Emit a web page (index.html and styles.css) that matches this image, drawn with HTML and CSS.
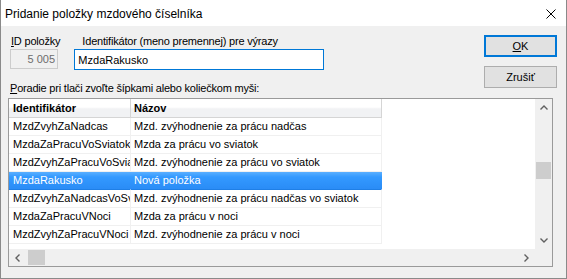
FILE: index.html
```html
<!DOCTYPE html>
<html lang="sk">
<head>
    <meta charset="UTF-8">
    <title>Pridanie položky mzdového číselníka</title>
    <link rel="stylesheet" href="styles.css">
</head>
<body>
    <div class="dialog">
        <!-- titulok okna -->
        <div class="titlebar">
            <span class="title">Pridanie položky mzdového číselníka</span>
            <svg class="close" width="10" height="10" viewBox="0 0 10 10">
                <path d="M0.5 0.5 L9.5 9.5 M9.5 0.5 L0.5 9.5" stroke="#000" stroke-width="1" fill="none"/>
            </svg>
        </div>

        <div class="content">
            <div class="top">
                <div class="fields">
                    <div class="field-row">
                        <div class="field field-id">
                            <label for="id_polozky"><u>I</u>D položky</label>
                            <input type="text" id="id_polozky" class="edit edit-id" value="5 005" readonly>
                        </div>
                        <div class="field field-ident">
                            <label for="identifikator">Identifikátor (meno premennej) pre výrazy</label>
                            <input type="text" id="identifikator" class="edit edit-ident" value="MzdaRakusko">
                        </div>
                    </div>
                    <label class="order-label"><u>P</u>oradie pri tlači zvoľte šípkami alebo koliečkom myši:</label>
                </div>

                <div class="buttons">
                    <button class="btn btn-default"><u>O</u>K</button>
                    <button class="btn">Zrušiť</button>
                </div>
            </div>

            <!-- zoznam položiek -->
            <div class="list">
                <div class="view">
                    <div class="row header">
                        <div class="cell col1">Identifikátor</div>
                        <div class="cell col2">Názov</div>
                    </div>
                    <div class="row">
                        <div class="cell col1">MzdZvyhZaNadcas</div>
                        <div class="cell col2">Mzd. zvýhodnenie za prácu nadčas</div>
                    </div>
                    <div class="row">
                        <div class="cell col1">MzdaZaPracuVoSviatok</div>
                        <div class="cell col2">Mzda za prácu vo sviatok</div>
                    </div>
                    <div class="row">
                        <div class="cell col1">MzdZvyhZaPracuVoSviatok</div>
                        <div class="cell col2">Mzd. zvýhodnenie za prácu vo sviatok</div>
                    </div>
                    <div class="row selected">
                        <div class="cell col1">MzdaRakusko</div>
                        <div class="cell col2">Nová položka</div>
                    </div>
                    <div class="row">
                        <div class="cell col1">MzdZvyhZaNadcasVoSviatok</div>
                        <div class="cell col2">Mzd. zvýhodnenie za prácu nadčas vo sviatok</div>
                    </div>
                    <div class="row">
                        <div class="cell col1">MzdaZaPracuVNoci</div>
                        <div class="cell col2">Mzda za prácu v noci</div>
                    </div>
                    <div class="row">
                        <div class="cell col1">MzdZvyhZaPracuVNoci</div>
                        <div class="cell col2">Mzd. zvýhodnenie za prácu v noci</div>
                    </div>
                </div>

                <div class="vscroll">
                    <div class="arrow">
                        <svg width="8" height="5" viewBox="0 0 8 5"><path d="M0.5 4.5 L4 1 L7.5 4.5" stroke="#606060" stroke-width="1.4" fill="none"/></svg>
                    </div>
                    <div class="vtrack">
                        <div class="vthumb"></div>
                    </div>
                    <div class="arrow">
                        <svg width="8" height="5" viewBox="0 0 8 5"><path d="M0.5 0.5 L4 4 L7.5 0.5" stroke="#606060" stroke-width="1.4" fill="none"/></svg>
                    </div>
                </div>

                <div class="hscroll">
                    <div class="arrow">
                        <svg width="5" height="8" viewBox="0 0 5 8"><path d="M4.5 0.5 L1 4 L4.5 7.5" stroke="#606060" stroke-width="1.4" fill="none"/></svg>
                    </div>
                    <div class="htrack">
                        <div class="hthumb"></div>
                    </div>
                    <div class="arrow">
                        <svg width="5" height="8" viewBox="0 0 5 8"><path d="M0.5 0.5 L4 4 L0.5 7.5" stroke="#606060" stroke-width="1.4" fill="none"/></svg>
                    </div>
                </div>

                <div class="corner"></div>
            </div>
        </div>
    </div>
</body>
</html>
```

FILE: styles.css
```css
/* celé okno dialógu */
body {
    margin: 0;
    font-family: "Liberation Sans", Arial, sans-serif;
    font-size: 11px;
    color: #000;
}

.dialog {
    width: 567px;
    height: 279px;
    box-sizing: border-box;
    border: 1px solid #8a8a8a;
    border-top: none;
    display: flex;
    flex-direction: column;
    background-color: #f0f0f0;
}

.titlebar {
    height: 26px;
    background-color: #fff;
    display: flex;
    align-items: center;
    justify-content: space-between;
    padding: 0 10px 0 4px;
    flex-shrink: 0;
}

.title {
    font-size: 12px;
    margin-top: 1px;
}

.close {
    margin-top: 2px;
}

.content {
    flex: 1;
    display: flex;
    flex-direction: column;
}

/* horná časť: polia a tlačidlá */
.top {
    display: flex;
    padding-top: 8px;
}

.fields {
    display: flex;
    flex-direction: column;
}

.field-row {
    display: flex;
}

.field {
    display: flex;
    flex-direction: column;
}

.field label,
.order-label {
    line-height: 15px;
    letter-spacing: -0.2px;
    white-space: nowrap;
}

.field-id {
    margin-left: 9px;
}

.field-id label {
    padding-left: 1px;
}

.field-ident {
    margin-left: 14px;
}

.field-ident label {
    padding-left: 8px;
}

.edit {
    font-family: "Liberation Sans", Arial, sans-serif;
    font-size: 11px;
    box-sizing: border-box;
    margin: 0;
    outline: none;
}

.edit-id {
    width: 48px;
    height: 20px;
    border: 1px solid #cccccc;
    background-color: #f0f0f0;
    color: #6d6d6d;
    text-align: right;
    padding: 0 2px 0 0;
}

.edit-ident {
    width: 250px;
    height: 21px;
    border: 1px solid #0078d7;
    background-color: #fff;
    color: #000;
    padding: 0 0 0 3px;
}

.order-label {
    margin: 11px 0 0 9px;
}

.buttons {
    margin-left: auto;
    margin-right: 9px;
    margin-top: 1px;
    display: flex;
    flex-direction: column;
    gap: 9px;
}

.btn {
    width: 73px;
    height: 22px;
    box-sizing: border-box;
    font-family: "Liberation Sans", Arial, sans-serif;
    font-size: 11px;
    color: #000;
    background-color: #e1e1e1;
    border: 1px solid #adadad;
    padding: 0;
}

.btn-default {
    border: 2px solid #0078d7;
}

/* zoznam so scrollbarmi */
.list {
    margin: 2px 0 0 7px;
    width: 545px;
    height: 169px;
    box-sizing: border-box;
    border: 1px solid #9a9a9a;
    display: grid;
    grid-template-columns: 1fr 17px;
    grid-template-rows: 1fr 17px;
}

.view {
    background-color: #fff;
    overflow: hidden;
}

.row {
    display: flex;
    height: 18px;
    width: 373px;
}

.cell {
    box-sizing: border-box;
    height: 18px;
    line-height: 17px;
    border-bottom: 1px solid #f0f0f0;
    border-right: 1px solid #f0f0f0;
    white-space: nowrap;
    overflow: hidden;
}

.col1 {
    width: 122px;
    padding-left: 4px;
}

.col2 {
    width: 251px;
    padding-left: 3px;
}

.header .cell {
    height: 19px;
    line-height: 18px;
    font-weight: bold;
    background: linear-gradient(to bottom, #ffffff 0%, #ffffff 45%, #f1f2f4 55%, #f1f2f4 100%);
    border-bottom: 1px solid #d5d5d5;
    border-right: 1px solid #d5d5d5;
}

.header {
    height: 19px;
}

.selected .cell {
    color: #fff;
    background: linear-gradient(to bottom, #5aafff 0%, #3399ff 30%, #2a8cf6 100%);
    border-bottom-color: #1f7fe6;
    border-right-color: transparent;
}

.vscroll {
    background-color: #f0f0f0;
    display: flex;
    flex-direction: column;
}

.vscroll .arrow {
    height: 17px;
    display: flex;
    align-items: center;
    justify-content: center;
}

.vtrack {
    flex: 1;
    padding-top: 46px;
}

.vthumb {
    width: 15px;
    height: 17px;
    margin-left: 1px;
    background-color: #cdcdcd;
}

.hscroll {
    background-color: #f0f0f0;
    display: flex;
}

.hscroll .arrow {
    width: 17px;
    display: flex;
    align-items: center;
    justify-content: center;
}

.htrack {
    flex: 1;
    padding-left: 2px;
}

.hthumb {
    width: 17px;
    height: 15px;
    margin-top: 1px;
    background-color: #cdcdcd;
}

.corner {
    background-color: #f0f0f0;
}
```
